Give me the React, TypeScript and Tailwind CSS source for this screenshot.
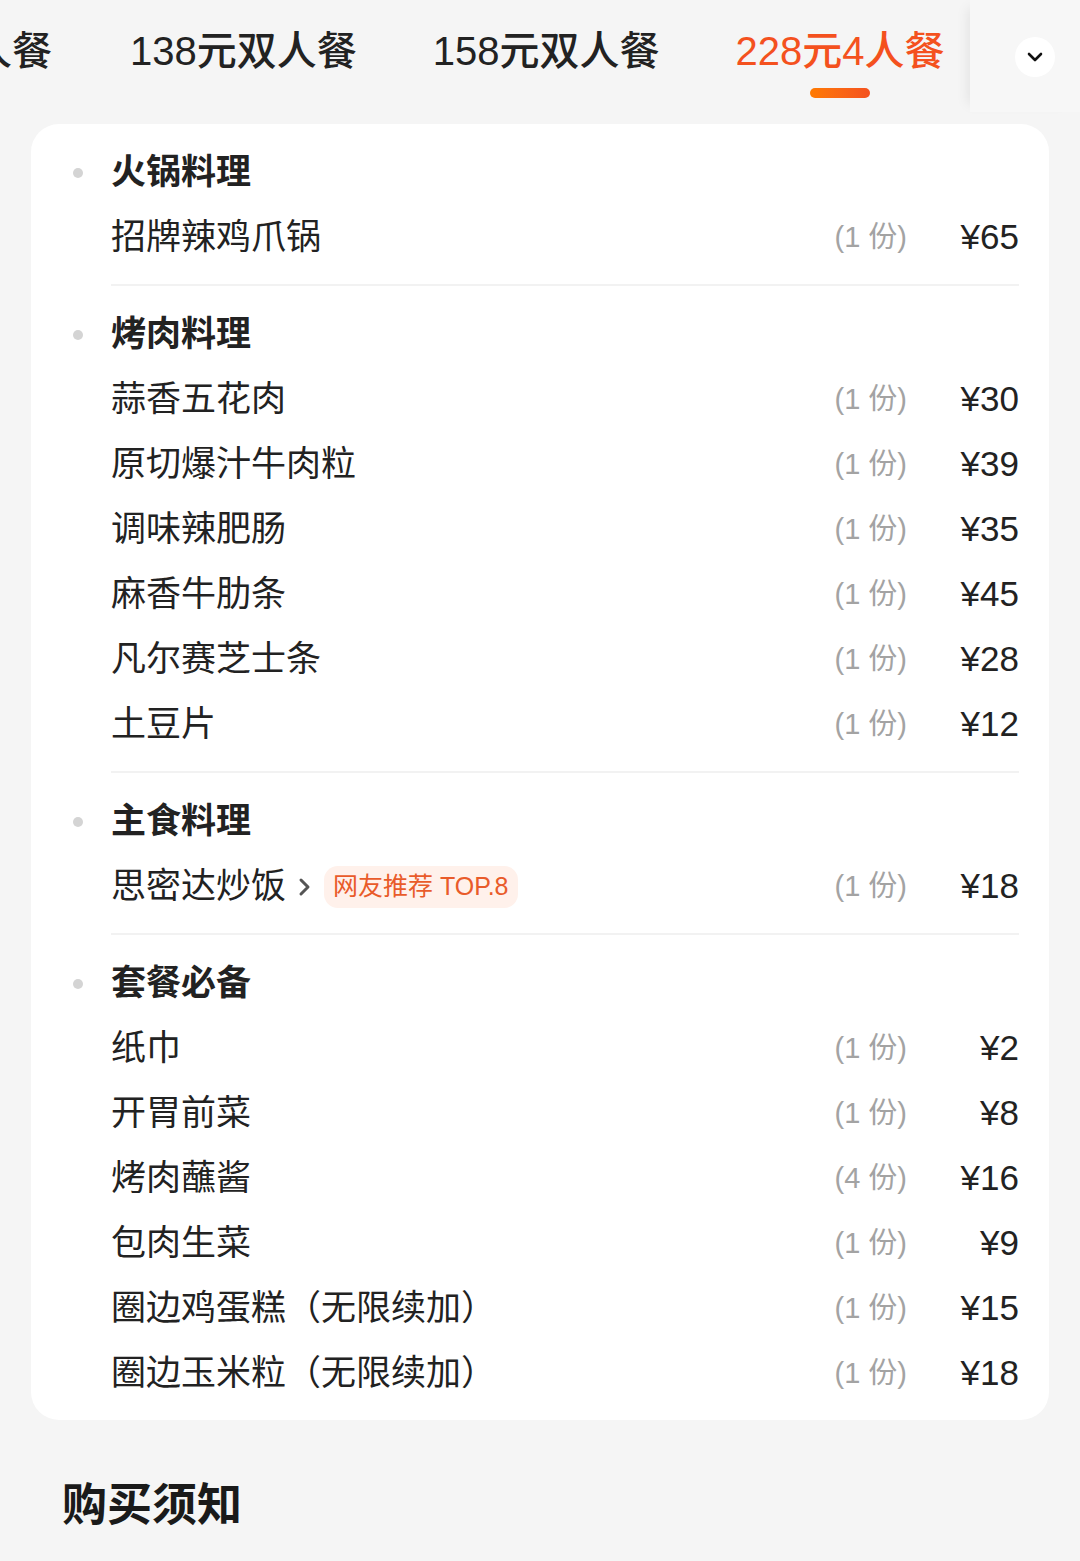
import React from 'react';

type Item = { name: string; qty: number; price: number; arrow?: boolean; tag?: string };
type Section = { title: string; items: Item[] };

const sections: Section[] = [
  { title: '火锅料理', items: [{ name: '招牌辣鸡爪锅', qty: 1, price: 65 }] },
  {
    title: '烤肉料理',
    items: [
      { name: '蒜香五花肉', qty: 1, price: 30 },
      { name: '原切爆汁牛肉粒', qty: 1, price: 39 },
      { name: '调味辣肥肠', qty: 1, price: 35 },
      { name: '麻香牛肋条', qty: 1, price: 45 },
      { name: '凡尔赛芝士条', qty: 1, price: 28 },
      { name: '土豆片', qty: 1, price: 12 },
    ],
  },
  {
    title: '主食料理',
    items: [{ name: '思密达炒饭', qty: 1, price: 18, arrow: true, tag: '网友推荐 TOP.8' }],
  },
  {
    title: '套餐必备',
    items: [
      { name: '纸巾', qty: 1, price: 2 },
      { name: '开胃前菜', qty: 1, price: 8 },
      { name: '烤肉蘸酱', qty: 4, price: 16 },
      { name: '包肉生菜', qty: 1, price: 9 },
      { name: '圈边鸡蛋糕（无限续加）', qty: 1, price: 15 },
      { name: '圈边玉米粒（无限续加）', qty: 1, price: 18 },
    ],
  },
];

const tabs = ['138元双人餐', '158元双人餐', '228元4人餐'];

const font = { fontFamily: '"Liberation Sans", "Noto Sans CJK SC", sans-serif' };

export default function App() {
  return (
    <div className="min-h-[1561px] bg-[#f5f5f5] pb-10" style={font}>
      {/* 套餐切换 */}
      <div className="flex h-[112px]">
        <div className="flex flex-1 items-start overflow-hidden pt-[23px]">
          <div className="flex w-[52px] shrink-0 justify-end">
            <span className="whitespace-nowrap text-[40px] font-medium leading-[56px] text-[#222]">108元双人餐</span>
          </div>
          {tabs.map((t, i) => {
            const active = i === tabs.length - 1;
            return (
              <div key={t} className={`${i === 0 ? 'ml-[78px]' : 'ml-[76px]'} flex shrink-0 flex-col items-center`}>
                <span
                  className={`whitespace-nowrap text-[40px] font-medium leading-[56px] ${
                    active ? 'text-[#f4511e]' : 'text-[#222]'
                  }`}
                >
                  {t}
                </span>
                {active && (
                  <div className="mt-[9px] h-[10px] w-[60px] rounded-full bg-gradient-to-r from-[#ff7a00] to-[#f4511e]" />
                )}
              </div>
            );
          })}
        </div>
        <div className="flex w-[110px] shrink-0 items-start justify-center bg-[#f7f7f7] pt-[37px] pl-[20px] shadow-[-10px_0_12px_-8px_rgba(0,0,0,0.08)]">
          <div className="flex h-[40px] w-[40px] items-center justify-center rounded-full bg-white">
            <svg width="16" height="10" viewBox="0 0 16 10" fill="none">
              <path d="M2 2l6 6 6-6" stroke="#111" strokeWidth="2.6" strokeLinecap="round" strokeLinejoin="round" />
            </svg>
          </div>
        </div>
      </div>

      {/* 菜单卡片 */}
      <div className="mx-[31px] mt-[12px] rounded-[28px] bg-white pl-[80px] pr-[30px]">
        {sections.map((s, si) => (
          <div
            key={s.title}
            className={`pt-[16px] pb-[14px] ${si < sections.length - 1 ? 'border-b-2 border-[#f2f2f2]' : ''}`}
          >
            <div className="-ml-[38px] flex h-[65px] items-center">
              <div className="mr-[28px] h-[10px] w-[10px] rounded-full bg-[#d4d4d4]" />
              <span className="text-[35px] font-semibold text-[#222]">{s.title}</span>
            </div>
            {s.items.map((it) => (
              <div key={it.name} className="flex h-[65px] items-center">
                <span className="text-[35px] text-[#222]">{it.name}</span>
                {it.arrow && (
                  <svg className="ml-[12px]" width="14" height="20" viewBox="0 0 14 20" fill="none">
                    <path d="M3 3l7 7-7 7" stroke="#555" strokeWidth="3" strokeLinecap="round" strokeLinejoin="round" />
                  </svg>
                )}
                {it.tag && (
                  <span className="ml-[12px] flex h-[42px] items-center rounded-[14px] bg-[#fff1eb] px-[9px] text-[25px] text-[#e95b2a]">
                    {it.tag}
                  </span>
                )}
                <span className="ml-auto whitespace-nowrap text-[29px] text-[#a3a3a3]">({it.qty} 份)</span>
                <span className="w-[112px] text-right text-[35px] text-[#222]">¥{it.price}</span>
              </div>
            ))}
          </div>
        ))}
      </div>

      <div className="mt-[56px] pl-[62px] text-[45px] font-bold leading-[60px] text-[#1a1a1a]">购买须知</div>
    </div>
  );
}
